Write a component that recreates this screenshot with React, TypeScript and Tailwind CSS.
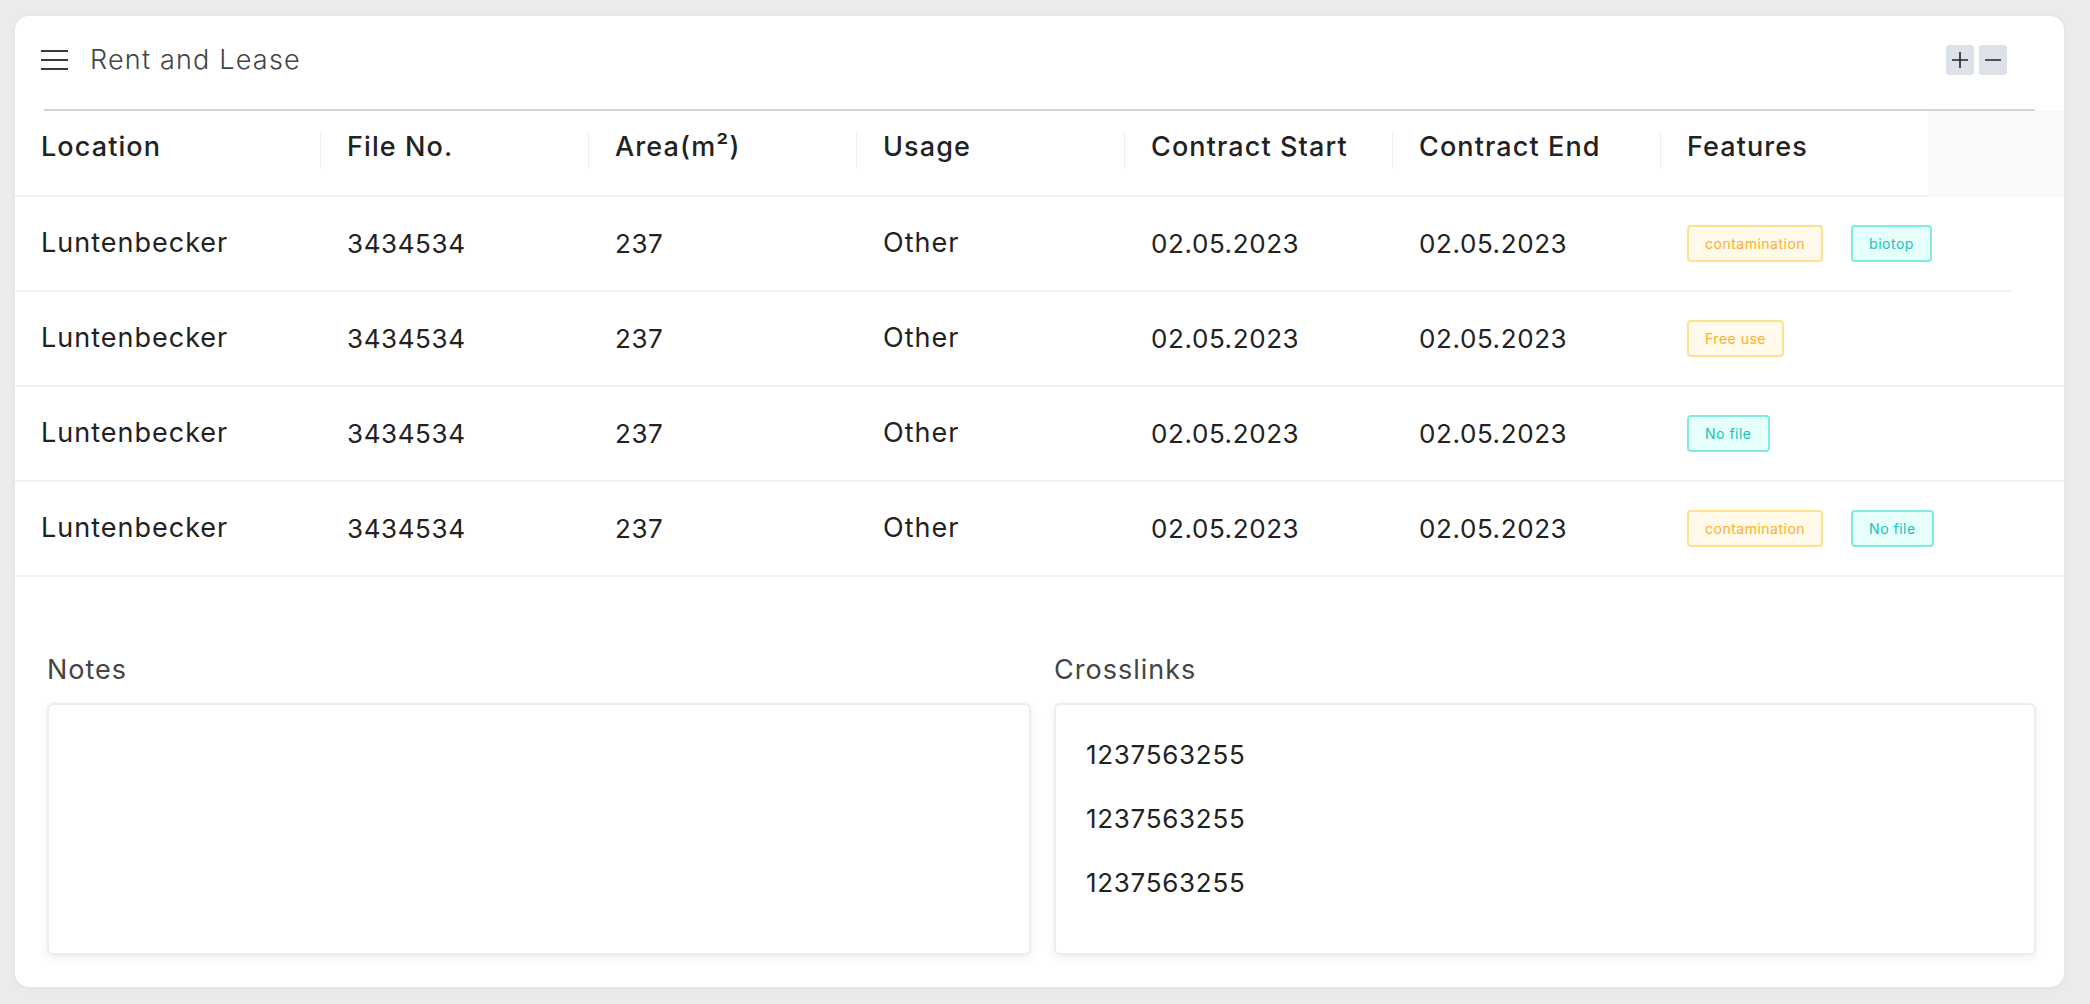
import React from 'react';

type Tag = { label: string; tone: 'amber' | 'teal' };

const COLUMNS = ['Location', 'File No.', 'Area(m²)', 'Usage', 'Contract Start', 'Contract End', 'Features'];

const ROWS: { tags: Tag[] }[] = [
  { tags: [{ label: 'contamination', tone: 'amber' }, { label: 'biotop', tone: 'teal' }] },
  { tags: [{ label: 'Free use', tone: 'amber' }] },
  { tags: [{ label: 'No file', tone: 'teal' }] },
  { tags: [{ label: 'contamination', tone: 'amber' }, { label: 'No file', tone: 'teal' }] },
];

const CROSSLINKS = ['1237563255', '1237563255', '1237563255'];

function Badge({ tag }: { tag: Tag }) {
  const tone =
    tag.tone === 'amber'
      ? 'border-[#ffe08f] bg-[#fffaea] text-[#ffae2b]'
      : 'border-[#80ebdf] bg-[#e6fffb] text-[#17c2c0]';
  return (
    <span className={`inline-flex h-[37px] items-center rounded-[4px] border-2 px-[16px] text-[14px] tracking-[0.5px] ${tone}`}>
      {tag.label}
    </span>
  );
}

// words are set wider than digits, to follow the geometric face of the original
function Cell({ children, first, word }: { children: React.ReactNode; first?: boolean; word?: boolean }) {
  return (
    <div
      className={`flex h-full items-center ${first ? 'w-[305px] pl-[26px]' : 'w-[268px] pl-[27px]'} ${
        word ? 'text-[27px] tracking-[1px]' : 'text-[26px] tracking-[0.6px]'
      }`}
    >
      {children}
    </div>
  );
}

export default function App() {
  return (
    <div
      className="min-h-screen bg-[#ebebeb] pt-[16px] pl-[15px]"
      style={{ fontFamily: 'Inter, "Noto Sans", sans-serif' }}
    >
      <div className="flex h-[971px] w-[2049px] flex-col overflow-hidden rounded-[14px] bg-white shadow-[0_1px_6px_rgba(0,0,0,0.06)]">
        {/* Title bar */}
        <div className="flex h-[93px] items-center pl-[26px] pr-[57px] pb-[5px]">
          <svg width="27" height="22" viewBox="0 0 27 22" className="mr-[22px]">
            <path d="M0 2h27M0 11h27M0 20h27" stroke="#3a3a3a" strokeWidth="2" />
          </svg>
          <span className="text-[27px] font-light tracking-[1.2px] text-[#444]">Rent and Lease</span>
          <div className="ml-auto flex gap-[5px]">
            <button className="flex h-[30px] w-[28px] items-center justify-center rounded-[3px] bg-[#dde1e8]">
              <svg width="18" height="18" viewBox="0 0 18 18">
                <path d="M9 1v16M1 9h16" stroke="#222" strokeWidth="1.6" />
              </svg>
            </button>
            <button className="flex h-[30px] w-[28px] items-center justify-center rounded-[3px] bg-[#dde1e8]">
              <svg width="18" height="18" viewBox="0 0 18 18">
                <path d="M1 9h16" stroke="#222" strokeWidth="1.6" />
              </svg>
            </button>
          </div>
        </div>
        <div className="mx-[29px] h-[2px] bg-[#d4d4d4]" />

        {/* Table header */}
        <div className="flex h-[86px]">
          <div className="flex border-b-2 border-[#f0f0f0]">
            {COLUMNS.map((c, i) => (
              <div
                key={c}
                className={`relative flex items-start pt-[16px] text-[27px] font-medium tracking-[1.1px] text-[#222] ${
                  i === 0 ? 'w-[305px] pl-[26px]' : 'w-[268px] pl-[27px]'
                }`}
              >
                {i > 0 && <span className="absolute left-0 top-[21px] h-[37px] w-px bg-[#ececec]" />}
                {c}
              </div>
            ))}
          </div>
          <div className="flex-1 bg-[#f9f9f9]" />
        </div>

        {/* Table rows */}
        {ROWS.map((r, i) => (
          <div
            key={i}
            className={`flex h-[95px] border-b-2 border-[#f0f0f0] text-[#222] ${i === 0 ? 'w-[1997px]' : 'w-full'}`}
          >
            <Cell first word>Luntenbecker</Cell>
            <Cell>3434534</Cell>
            <Cell>237</Cell>
            <Cell word>Other</Cell>
            <Cell>02.05.2023</Cell>
            <Cell>02.05.2023</Cell>
            <div className="flex h-full items-center gap-[28px] pl-[27px]">
              {r.tags.map((t, j) => (
                <Badge key={j} tag={t} />
              ))}
            </div>
          </div>
        ))}

        {/* Notes & crosslinks */}
        <div className="mt-[73px] grid grid-cols-[984px_982px] gap-[23px] pl-[32px]">
          <div>
            <div className="mb-[12px] text-[27px] tracking-[1px] text-[#444]">Notes</div>
            <div className="h-[252px] rounded-[6px] border-2 border-[#ededed] shadow-[0_3px_8px_rgba(0,0,0,0.07)]" />
          </div>
          <div>
            <div className="mb-[12px] text-[27px] tracking-[1px] text-[#444]">Crosslinks</div>
            <div className="flex h-[252px] flex-col gap-[25px] rounded-[6px] border-2 border-[#ededed] px-[30px] pt-[30px] shadow-[0_3px_8px_rgba(0,0,0,0.07)]">
              {CROSSLINKS.map((c, i) => (
                <div key={i} className="text-[26px] leading-[39px] tracking-[0.7px] text-[#222]">
                  {c}
                </div>
              ))}
            </div>
          </div>
        </div>
      </div>
    </div>
  );
}
